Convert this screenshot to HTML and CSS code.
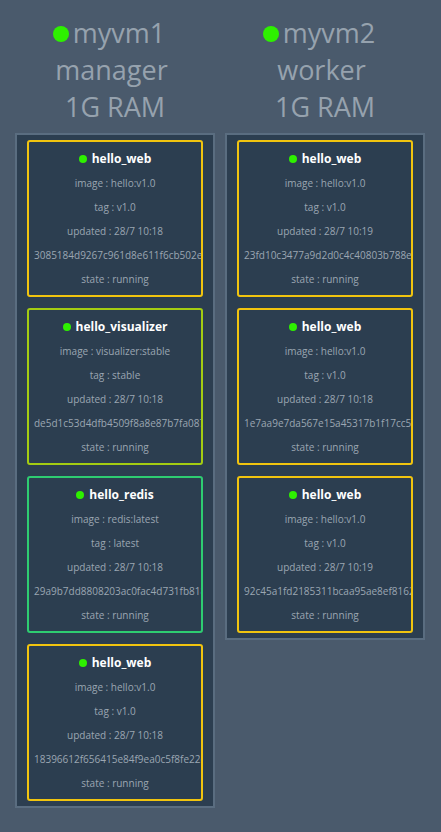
FILE: index.html
```html
<!DOCTYPE html>
<html>
<head>
<meta charset="utf-8">
<link rel="stylesheet" href="styles.css">
</head>
<body>
<div class="board">
  <div class="node">
    <div class="node-head">
      <div class="node-name"><span class="dot big"></span>myvm1</div>
      <div>manager</div>
      <div>&nbsp;1G RAM</div>
    </div>
    <div class="node-box">
      <div class="card c-web">
        <div class="card-title"><span class="dot"></span>hello_web</div>
        <div class="line">image : hello:v1.0</div>
        <div class="line">tag : v1.0</div>
        <div class="line">updated : 28/7 10:18</div>
        <div class="line hash">3085184d9267c961d8e611f6cb502ea41bc7</div>
        <div class="line">state : running</div>
      </div>
      <div class="card c-vis">
        <div class="card-title"><span class="dot"></span>hello_visualizer</div>
        <div class="line">image : visualizer:stable</div>
        <div class="line">tag : stable</div>
        <div class="line">updated : 28/7 10:18</div>
        <div class="line hash">de5d1c53d4dfb4509f8a8e87b7fa087c21e4</div>
        <div class="line">state : running</div>
      </div>
      <div class="card c-redis">
        <div class="card-title"><span class="dot"></span>hello_redis</div>
        <div class="line">image : redis:latest</div>
        <div class="line">tag : latest</div>
        <div class="line">updated : 28/7 10:18</div>
        <div class="line hash">29a9b7dd8808203ac0fac4d731fb818e2c4a</div>
        <div class="line">state : running</div>
      </div>
      <div class="card c-web">
        <div class="card-title"><span class="dot"></span>hello_web</div>
        <div class="line">image : hello:v1.0</div>
        <div class="line">tag : v1.0</div>
        <div class="line">updated : 28/7 10:18</div>
        <div class="line hash">18396612f656415e84f9ea0c5f8fe22c1b7a</div>
        <div class="line">state : running</div>
      </div>
    </div>
  </div>
  <div class="node">
    <div class="node-head">
      <div class="node-name"><span class="dot big"></span>myvm2</div>
      <div>worker</div>
      <div>&nbsp;1G RAM</div>
    </div>
    <div class="node-box">
      <div class="card c-web">
        <div class="card-title"><span class="dot"></span>hello_web</div>
        <div class="line">image : hello:v1.0</div>
        <div class="line">tag : v1.0</div>
        <div class="line">updated : 28/7 10:19</div>
        <div class="line hash">23fd10c3477a9d2d0c4c40803b788e5a1f2c</div>
        <div class="line">state : running</div>
      </div>
      <div class="card c-web">
        <div class="card-title"><span class="dot"></span>hello_web</div>
        <div class="line">image : hello:v1.0</div>
        <div class="line">tag : v1.0</div>
        <div class="line">updated : 28/7 10:18</div>
        <div class="line hash">1e7aa9e7da567e15a45317b1f17cc5d2e8a0</div>
        <div class="line">state : running</div>
      </div>
      <div class="card c-web">
        <div class="card-title"><span class="dot"></span>hello_web</div>
        <div class="line">image : hello:v1.0</div>
        <div class="line">tag : v1.0</div>
        <div class="line">updated : 28/7 10:19</div>
        <div class="line hash">92c45a1fd2185311bcaa95ae8ef8162b7d3e</div>
        <div class="line">state : running</div>
      </div>
    </div>
  </div>
</div>
</body>
</html>
```

FILE: styles.css
```css
html, body {
  margin: 0;
  padding: 0;
  background: #4a5a6c;
  font-family: "Open Sans", "DejaVu Sans", sans-serif;
}
.board {
  display: flex;
  align-items: flex-start;
  gap: 10px;
  padding: 14px 0 0 15px;
}
.node {
  width: 200px;
  display: flex;
  flex-direction: column;
}
.node-head {
  color: #96a2ae;
  font-size: 27px;
  line-height: 37px;
  text-align: center;
  padding-right: 7px;
  margin-bottom: 8px;
}
.node-name {
  display: flex;
  align-items: center;
  justify-content: center;
  gap: 4px;
  margin-right: 5px;
}
.dot {
  display: inline-block;
  width: 8px;
  height: 8px;
  border-radius: 50%;
  background: #2ef000;
  flex: none;
}
.dot.big {
  width: 16px;
  height: 16px;
  margin-top: 2px;
}
.node-box {
  background: #2c3e50;
  border: 2px solid #5a6d80;
  padding: 5px 10px;
  display: flex;
  flex-direction: column;
  gap: 11px;
}
.card {
  border: 2px solid #f1c40f;
  border-radius: 3px;
  padding: 5px 5px 4px;
  text-align: center;
  overflow: hidden;
  white-space: nowrap;
}
.c-web { border-color: #f1c40f; }
.c-vis { border-color: #a3cc12; }
.c-redis { border-color: #2ecc71; }
.card-title {
  display: flex;
  align-items: center;
  justify-content: center;
  gap: 5px;
  color: #ffffff;
  font-weight: bold;
  font-size: 12px;
  line-height: 24px;
}
.line {
  color: #9ba6b2;
  font-size: 10px;
  line-height: 24px;
}
```
